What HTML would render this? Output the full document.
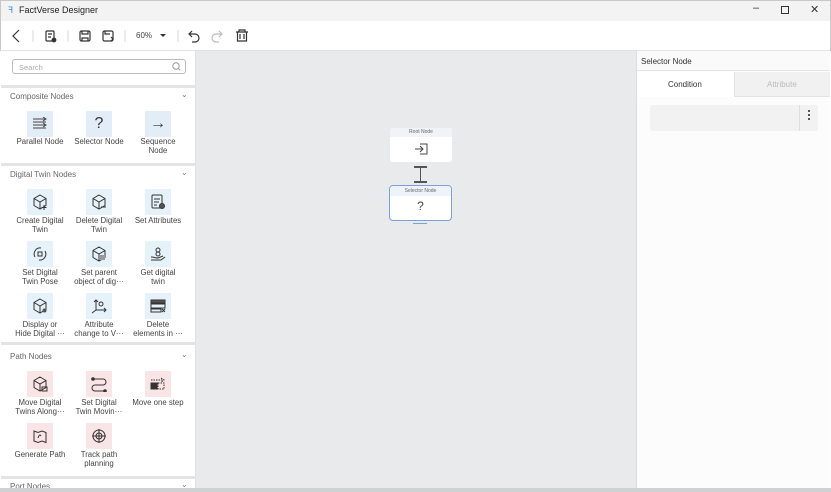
<!DOCTYPE html>
<html><head><meta charset="utf-8"><style>
*{margin:0;padding:0;box-sizing:border-box}
body{width:831px;height:492px;overflow:hidden;background:#fff;font-family:"Liberation Sans",sans-serif;position:relative;color:#333}
.abs{position:absolute}
.title{left:0;top:0;width:831px;height:21px;background:#f3f3f3;border:1px solid #c8c8c8;border-bottom:none}
.tb{left:0;top:21px;width:831px;height:30px;background:#fff;border-left:1px solid #c8c8c8;border-right:1px solid #c8c8c8;border-bottom:1px solid #e2e2e2}
.left{left:1px;top:51px;width:195px;height:437px;background:#fff;border-right:1px solid #e0e0e0}
.canvas{left:196px;top:51px;width:440px;height:437px;background:#e9eaeb}
.right{left:636px;top:51px;width:194px;height:437px;background:#fcfcfc;border-left:1px solid #ddd}
.bottom{left:0;top:488px;width:831px;height:4px;background:#cfd2d3}
.sep{left:1px;width:195px;height:3px;background:#e4e4e4}
.sh{left:10px;font-size:8px;color:#666}
.chev{font-size:8px;color:#777;left:181px}
.ic{width:26px;height:26px;display:flex;align-items:center;justify-content:center}
.lb{font-size:7.8px;color:#444;text-align:center;width:70px;line-height:8.5px}
.b{background:#e3edf8}.c{background:#e5f2f9}.p{background:#f9e4e6}
svg{display:block}
</style></head><body>
<div class="abs title"></div>
<div class="abs" style="left:8px;top:5px;font-size:9px;color:#3a8fd0">ꟻ</div>
<div class="abs" style="left:19px;top:5px;font-size:9px;color:#222">FactVerse Designer</div>
<div class="abs" style="left:753px;top:2px;font-size:11px;color:#333">–</div>
<div class="abs" style="left:781px;top:6px;width:8px;height:8px;border:1px solid #333"></div>
<div class="abs" style="left:810px;top:3px;font-size:11px;color:#333">✕</div>
<div class="abs tb"></div>
<svg class="abs" style="left:0;top:21px" width="260" height="30" viewBox="0 0 260 30" fill="none" stroke="#333" stroke-width="1.2">
<path d="M19 9 L13 15 L19 21"/>
<line x1="33" y1="9" x2="33" y2="21" stroke="#ddd"/>
<rect x="46" y="10" width="8" height="10" rx="1"/><path d="M48 13h4M48 16h3"/><circle cx="54" cy="19" r="1.8" fill="#333"/>
<line x1="68" y1="9" x2="68" y2="21" stroke="#ddd"/>
<rect x="80" y="10" width="10" height="10" rx="1.5"/><path d="M82 10v3h6v-3M82 20v-3h6v3"/>
<rect x="103" y="10" width="10" height="10" rx="1.5"/><path d="M105 10v3h5M111 16l2 2-2 2"/>
<line x1="125" y1="9" x2="125" y2="21" stroke="#ddd"/>
<path d="M160 13l3 3 3-3z" fill="#333" stroke="none"/>
<line x1="178" y1="9" x2="178" y2="21" stroke="#ddd"/>
<path d="M192 10l-3 3 3 3M189 13h6a4 4 0 0 1 0 8h-3"/>
<path d="M219 10l3 3-3 3M222 13h-6a4 4 0 0 0 0 8h3" stroke="#bbb"/>
<path d="M236 11h12M239 11v-2h6v2M237.5 11v9h9v-9M240 13v5M244 13v5"/>
</svg>
<div class="abs" style="left:136px;top:31px;font-size:8px;color:#444">60%</div>

<div class="abs left"></div>
<div class="abs" style="left:12px;top:59px;width:174px;height:15px;border:1px solid #bbb;border-radius:3px"></div>
<div class="abs" style="left:19px;top:63px;font-size:7.5px;color:#aaa">Search</div>
<svg class="abs" style="left:171px;top:61px" width="10" height="10" fill="none" stroke="#999"><circle cx="5" cy="5" r="3.2"/><path d="M7.3 7.3l2 2"/></svg>

<div class="abs sep" style="top:85px"></div>
<div class="abs sh" style="top:92px">Composite Nodes</div><div class="abs chev" style="top:90px">⌄</div>
<div class="abs sep" style="top:163px"></div>
<div class="abs sh" style="top:170px">Digital Twin Nodes</div><div class="abs chev" style="top:168px">⌄</div>
<div class="abs sep" style="top:342px"></div>
<div class="abs sh" style="top:352px">Path Nodes</div><div class="abs chev" style="top:350px">⌄</div>
<div class="abs sep" style="top:476px"></div>
<div class="abs sh" style="top:482px">Port Nodes</div><div class="abs chev" style="top:480px">⌄</div>

<div class="abs ic b" style="left:27px;top:111px"><svg width="16" height="14" fill="none" stroke="#444"><path d="M1 2h13M1 5h13M1 8h13M1 11h13M11 0l3 2-3 2M11 6l3 2-3 2"/></svg></div>
<div class="abs ic b" style="left:86px;top:111px;font-size:16px;color:#333">?</div>
<div class="abs ic b" style="left:145px;top:111px;font-size:16px;color:#333">→</div>
<div class="abs lb" style="left:5px;top:138px">Parallel Node</div>
<div class="abs lb" style="left:64px;top:138px">Selector Node</div>
<div class="abs lb" style="left:123px;top:138px">Sequence<br>Node</div>

<svg width="0" height="0" style="position:absolute"><defs><g id="cube" fill="none" stroke="#333" stroke-width="1"><path d="M8 1l6 3.5v7L8 15l-6-3.5v-7z M2 4.5L8 8l6-3.5M8 8v7"/></g></defs></svg>
<div class="abs ic c" style="left:27px;top:189px"><svg width="16" height="16"><use href="#cube"/><path d="M12 11v5M9.5 13.5h5" stroke="#333"/></svg></div>
<div class="abs ic c" style="left:86px;top:189px"><svg width="16" height="16"><use href="#cube"/><path d="M10 13h5" stroke="#333"/></svg></div>
<div class="abs ic c" style="left:145px;top:189px"><svg width="16" height="16" fill="none" stroke="#333"><rect x="2" y="1" width="10" height="13" rx="1"/><path d="M4 5h6M4 8h5M4 11h3"/><circle cx="12" cy="12" r="2.5" fill="#555"/></svg></div>
<div class="abs lb" style="left:5px;top:217px">Create Digital<br>Twin</div>
<div class="abs lb" style="left:64px;top:217px">Delete Digital<br>Twin</div>
<div class="abs lb" style="left:123px;top:217px">Set Attributes</div>

<div class="abs ic c" style="left:27px;top:241px"><svg width="16" height="16" fill="none" stroke="#333"><path d="M3 11a6 6 0 0 1 6-9M13 5a6 6 0 0 1-6 9"/><rect x="6" y="6" width="4" height="4"/></svg></div>
<div class="abs ic c" style="left:86px;top:241px"><svg width="16" height="16"><use href="#cube"/><rect x="9" y="9" width="5" height="5" fill="#999"/></svg></div>
<div class="abs ic c" style="left:145px;top:241px"><svg width="16" height="16" fill="none" stroke="#333"><circle cx="8" cy="4" r="2"/><circle cx="8" cy="8" r="2"/><path d="M1 11c3 0 5 1 7 1l5-2M1 14h10l4-3"/></svg></div>
<div class="abs lb" style="left:5px;top:269px">Set Digital<br>Twin Pose</div>
<div class="abs lb" style="left:64px;top:269px">Set parent<br>object of dig···</div>
<div class="abs lb" style="left:123px;top:269px">Get digital<br>twin</div>

<div class="abs ic c" style="left:27px;top:293px"><svg width="16" height="16"><use href="#cube"/><circle cx="12.5" cy="12.5" r="2" fill="#555"/></svg></div>
<div class="abs ic c" style="left:86px;top:293px"><svg width="16" height="16" fill="none" stroke="#333"><path d="M5 2v10h10M5 12l-4 3M3 4l2-2 2 2M13 10l2 2-2 2"/><circle cx="10" cy="6" r="2"/></svg></div>
<div class="abs ic c" style="left:145px;top:293px"><svg width="16" height="16" fill="none" stroke="#333"><rect x="1" y="2" width="14" height="3" fill="#555"/><rect x="1" y="6" width="14" height="4"/><rect x="1" y="11" width="10" height="3"/><path d="M12 11l3 3M15 11l-3 3"/></svg></div>
<div class="abs lb" style="left:5px;top:321px">Display or<br>Hide Digital ···</div>
<div class="abs lb" style="left:64px;top:321px">Attribute<br>change to V···</div>
<div class="abs lb" style="left:123px;top:321px">Delete<br>elements in ···</div>

<div class="abs ic p" style="left:27px;top:371px"><svg width="16" height="16"><use href="#cube"/><path d="M10 11h5v4h-5z" stroke="#333" fill="none"/></svg></div>
<div class="abs ic p" style="left:86px;top:371px"><svg width="16" height="16" fill="none" stroke="#333"><path d="M3 3h9a3 3 0 0 1 0 6H4a3 3 0 0 0 0 6h9"/><circle cx="2" cy="3" r="1.3" fill="#333"/><circle cx="14" cy="15" r="1.3" fill="#333"/></svg></div>
<div class="abs ic p" style="left:145px;top:371px"><svg width="16" height="16" fill="none" stroke="#333"><path d="M1 4h12M11 2l3 2-3 2" stroke-dasharray="1.5 1"/><rect x="1" y="7" width="6" height="6" fill="#333"/><rect x="8" y="7" width="6" height="6" stroke-dasharray="1.5 1"/></svg></div>
<div class="abs lb" style="left:5px;top:399px">Move Digital<br>Twins Along···</div>
<div class="abs lb" style="left:64px;top:399px">Set Digital<br>Twin Movin···</div>
<div class="abs lb" style="left:123px;top:399px">Move one step</div>

<div class="abs ic p" style="left:27px;top:423px"><svg width="16" height="16" fill="none" stroke="#333"><path d="M2 3l4 1.5 4-1.5 4 1.5v10l-4-1.5-4 1.5-4-1.5z M6 10c1-3 2-4 3-2"/></svg></div>
<div class="abs ic p" style="left:86px;top:423px"><svg width="16" height="16" fill="none" stroke="#333"><circle cx="8" cy="8" r="6"/><circle cx="8" cy="8" r="3"/><path d="M8 1v14M1 8h14"/></svg></div>
<div class="abs lb" style="left:5px;top:451px">Generate Path</div>
<div class="abs lb" style="left:64px;top:451px">Track path<br>planning</div>

<div class="abs canvas"></div>
<div class="abs" style="left:390px;top:128px;width:62px;height:34px;background:#fff;border-radius:3px;overflow:hidden">
<div style="height:9px;background:#f0f3f8;font-size:5px;color:#666;text-align:center;line-height:9px">Root Node</div>
<svg style="margin:6px auto 0" width="14" height="12" fill="none" stroke="#444"><path d="M6 1h7v10H6M1 6h8M6 3l3 3-3 3"/></svg></div>
<div class="abs" style="left:420px;top:167px;width:1px;height:15px;background:#555"></div>
<div class="abs" style="left:414px;top:166px;width:13px;height:1.5px;background:#555"></div>
<div class="abs" style="left:414px;top:181px;width:13px;height:1.5px;background:#555"></div>
<div class="abs" style="left:389px;top:185px;width:63px;height:36px;background:#fff;border:1.5px solid #7aa1de;border-radius:4px;overflow:hidden">
<div style="height:10px;background:#eef2fa;font-size:5px;color:#666;text-align:center;line-height:10px">Selector Node</div>
<div style="text-align:center;font-size:12px;color:#444;margin-top:3px">?</div></div>
<div class="abs" style="left:413px;top:223px;width:14px;height:1px;background:#7aa1de"></div>

<div class="abs right"></div>
<div class="abs" style="left:637px;top:52px;width:193px;height:19px;background:#fafafa;border-bottom:1px solid #e5e5e5"></div>
<div class="abs" style="left:641px;top:57px;font-size:8px;color:#333">Selector Node</div>
<div class="abs" style="left:637px;top:72px;width:97px;height:25px;background:#fff"></div>
<div class="abs" style="left:734px;top:72px;width:96px;height:25px;background:#f1f1f1;border-left:1px solid #e5e5e5;border-bottom:1px solid #e2e2e2"></div>
<div class="abs" style="left:668px;top:80px;font-size:8px;color:#333">Condition</div>
<div class="abs" style="left:767px;top:80px;font-size:8px;color:#bbb">Attribute</div>
<div class="abs" style="left:650px;top:105px;width:168px;height:26px;background:#f2f2f2;border-radius:2px"></div>
<div class="abs" style="left:799px;top:105px;width:1px;height:26px;background:#ddd"></div>
<div class="abs" style="left:808px;top:110px;width:2px;height:2px;background:#555;box-shadow:0 4px #555,0 8px #555"></div>
<div class="abs bottom"></div>
</body></html>
